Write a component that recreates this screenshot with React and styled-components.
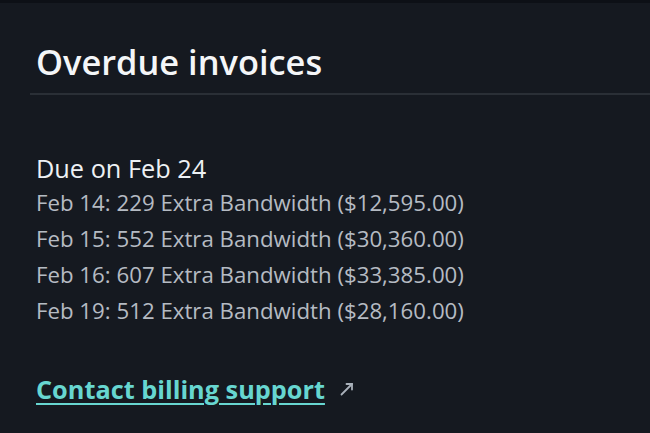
import React from 'react';
import styled, { createGlobalStyle } from 'styled-components';

const Global = createGlobalStyle`
  html, body {
    margin: 0;
    background: #151920;
  }
  body {
    font-family: "Open Sans", "Noto Sans", sans-serif;
  }
`;

const Frame = styled.div`
  height: 433px;
  border-top: 3px solid #0d1016;
  background: #151920;
  overflow: hidden;
`;

const Panel = styled.section`
  padding-left: 30px;
`;

const Header = styled.div`
  padding: 39px 0 11px 6px;
  border-bottom: 2px solid #2a2f36;
`;

const Title = styled.h1`
  margin: 0;
  font-size: 34.4px;
  font-weight: 600;
  line-height: 40px;
  color: #f4f6f8;
`;

const Body = styled.div`
  padding: 58px 0 0 6px;
`;

const DueTitle = styled.h2`
  margin: 0 0 2px;
  font-size: 25.3px;
  font-weight: 400;
  line-height: 30px;
  color: #eef1f4;
`;

const List = styled.ul`
  list-style: none;
  margin: 0;
  padding: 0;
`;

const Item = styled.li`
  font-size: 22.25px;
  line-height: 36px;
  color: #b5bbc3;
`;

const Link = styled.a`
  display: inline-flex;
  align-items: center;
  gap: 14px;
  margin-top: 43px;
  font-size: 25.3px;
  font-weight: 700;
  line-height: 34px;
  color: #67d6d0;
  text-decoration: none;
  cursor: pointer;

  span {
    text-decoration: underline;
    text-decoration-thickness: 2px;
    text-underline-offset: 4px;
  }
`;

const invoices = [
  'Feb 14: 229 Extra Bandwidth ($12,595.00)',
  'Feb 15: 552 Extra Bandwidth ($30,360.00)',
  'Feb 16: 607 Extra Bandwidth ($33,385.00)',
  'Feb 19: 512 Extra Bandwidth ($28,160.00)',
];

const Arrow = () => (
  <svg width="16" height="16" viewBox="0 0 16 16" fill="none" stroke="#a9b1ba" strokeWidth="1.8" strokeLinecap="round">
    <path d="M2.5 13.5 L13 3" />
    <path d="M7.5 3 H13 V8.5" />
  </svg>
);

export default function App() {
  return (
    <Frame>
      <Global />
      <Panel>
        <Header>
          <Title>Overdue invoices</Title>
        </Header>
        <Body>
          <DueTitle>Due on Feb 24</DueTitle>
          <List>
            {invoices.map((line) => (
              <Item key={line}>{line}</Item>
            ))}
          </List>
          <Link>
            <span>Contact billing support</span>
            <Arrow />
          </Link>
        </Body>
      </Panel>
    </Frame>
  );
}
